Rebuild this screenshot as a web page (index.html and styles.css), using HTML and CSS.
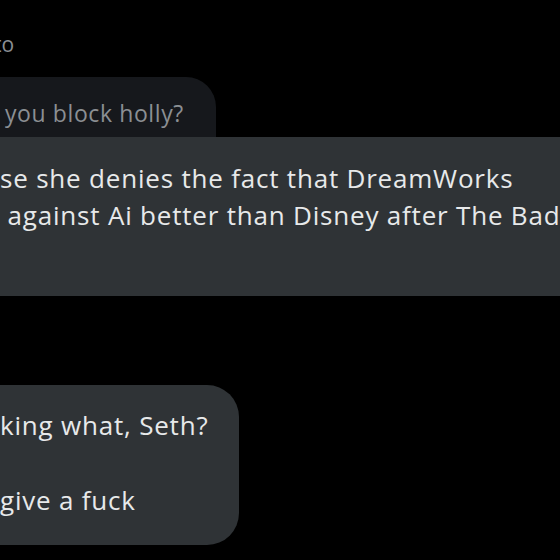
FILE: index.html
```html
<!DOCTYPE html>
<html lang="en">
<head>
  <meta charset="UTF-8">
  <title>Messages</title>
  <link rel="stylesheet" href="styles.css">
</head>
<body>

  <div class="thread">
    <!-- Cabeçalho da resposta -->
    <div class="reply-meta"><span>to</span></div>

    <div class="msg">
      <div class="quote">you block holly?</div>
      <div class="bubble wide">
        se she denies the fact that DreamWorks<br>
        &nbsp;against Ai better than Disney after The Bad Guys 2<br>
        &nbsp;
      </div>
    </div>

    <div class="msg second">
      <div class="bubble">
        king what, Seth?<br>
        &nbsp;<br>
        give a fuck
      </div>
    </div>
  </div>

</body>
</html>
```

FILE: styles.css
```css
* { box-sizing: border-box; margin: 0; padding: 0; }
html, body { background: #000; }
body {
  width: 560px;
  height: 560px;
  overflow: hidden;
  font-family: "Open Sans", "Noto Sans", sans-serif;
  color: #e7e9ea;
}
.thread {
  display: flex;
  flex-direction: column;
  padding-top: 30px;
}
.reply-meta {
  color: #8b8f93;
  font-size: 21px;
  line-height: 28px;
  margin-left: -6px;
}
.msg {
  display: flex;
  flex-direction: column;
  align-items: flex-start;
}
.quote {
  margin-top: 19px;
  width: 216px;
  height: 60px;
  background: #16181c;
  color: #8b8f93;
  font-size: 23px;
  letter-spacing: 0.6px;
  line-height: 28px;
  padding: 22px 0 0 5px;
  border-top-right-radius: 30px;
  white-space: nowrap;
}
.bubble {
  background: #2f3336;
  font-size: 26px;
  font-weight: 500;
  letter-spacing: 0.8px;
  line-height: 37px;
  padding: 23px 30px 25px 0;
  white-space: nowrap;
  border-radius: 0 32px 32px 0;
}
.bubble.wide {
  width: 600px;
  border-radius: 0;
}
.second {
  margin-top: 89px;
}
.second .bubble {
  width: 239px;
  line-height: 37.5px;
  padding-top: 22px;
}
```
